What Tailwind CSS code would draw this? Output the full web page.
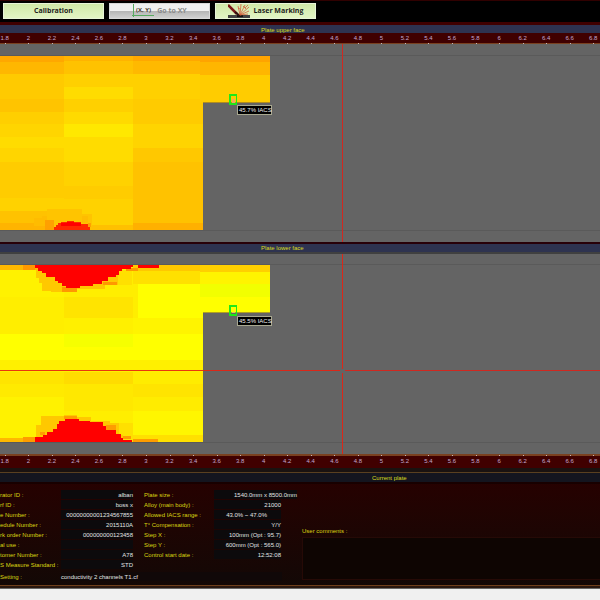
<!DOCTYPE html>
<html lang="en">
<head>
<meta charset="utf-8">
<title>Plate conductivity</title>
<script src="https://cdn.jsdelivr.net/npm/@tailwindcss/browser@4"></script>
</head>
<body class="bg-[#f0f0f0] font-['Liberation_Sans',sans-serif] text-[6px] leading-[10px] overflow-x-hidden">
<div class="flex flex-col min-h-screen">

<nav class="flex gap-[5px] h-[25px] px-[3px] pt-[2px] bg-black border-t border-b-3 border-t-[#300000] border-b-[#400000] font-['Open_Sans',sans-serif] text-[7px] font-bold">
  <button class="w-[101px] h-4 flex items-center justify-center bg-linear-to-b from-[#d0e8a8] to-[#e2f4c4] border border-[#e8f4d8] text-[#1c1c1c]">Calibration</button>
  <button class="w-[101px] h-4 flex items-center justify-center gap-[3px] bg-linear-to-b from-[#f0f0f0] from-50% via-[#b4b4b4] via-50% to-[#d0d0d0] border border-[#d8d8d8] text-[#8c8c8c]">
    <svg class="w-[22px] h-[14px]" viewBox="0 0 22 14" aria-hidden="true"><path d="M1.500 0v13M0 11.500h22" stroke="#58aa60" stroke-width="1" fill="none"/><text x="4" y="8" font-size="6" font-weight="700" fill="#4c4030" font-family="Open Sans">(X, Y)</text></svg>
    Go to XY
  </button>
  <button class="w-[101px] h-4 flex items-center justify-center gap-1 bg-linear-to-b from-[#d0e8a8] to-[#e2f4c4] border border-[#e8f4d8] text-[#1c1c1c]">
    <svg class="w-[22px] h-[14px]" viewBox="0 0 22 14" aria-hidden="true"><path d="M0 11h22v3H0z" fill="#444"/><path d="M9 12h6" stroke="#111" stroke-width="2"/><path d="M0 1L9 10" stroke="#7c1818" stroke-width="2.500"/><path d="M7 8l5 4" stroke="#301010" stroke-width="2"/><path d="M12 11L10 2M12 11L13 0M12 11L17 1M12 11L21 3M12 11L21 7M12 11L20 10M15 2l3 3M10 4l2 1M17 4l3-3" stroke="#d0603c" stroke-width=".8" fill="none"/></svg>
    Laser Marking
  </button>
</nav>

<main>
<section>
  <h2 class="h-2 leading-[10px] pl-[261px] bg-[#2e3350] text-[#dcdc20]">Plate upper face</h2>
  <ol class="ruler grid grid-cols-26 h-[11px] -ml-[7px] -mr-[5px] bg-[#400000] border-b border-[#7a4020] text-center leading-[11px] text-[#c0a8d0]"></ol>
  <svg class="block w-full h-[198px] bg-[#646464]" shape-rendering="crispEdges" role="img" aria-label="Upper face conductivity map">
    <path d="M0 11.500h2000M0 186.500h2000" stroke="#5a5a5a"/>
    <g class="bands" data-x="0" data-w="64" data-bands="12 18 #ffa800,18 30 #ffb700,30 55 #ffca00,55 68 #ffc400,68 80 #ffcf00,80 93 #ffd500,93 104 #ffdc00,104 118 #ffd500,118 154 #ffcc00,154 167 #ffd200,167 179 #ffc200,179 186 #ffb400"></g>
    <g class="bands" data-x="64" data-w="69" data-bands="12 17 #ffb400,17 30 #ffc200,30 43 #ffd000,43 55 #ffdc00,55 68 #ffd000,68 80 #ffda00,80 93 #ffe800,93 118 #ffdc00,118 142 #ffd200,142 155 #ffcc00,155 181 #ffd200,181 186 #ffc000"></g>
    <g class="bands" data-x="133" data-w="70" data-bands="12 17 #ffa800,17 30 #ffb900,30 55 #ffd000,55 80 #ffcb00,80 104 #ffd400,104 118 #ffc800,118 179 #ffc200,179 186 #ffb000"></g>
    <g class="bands" data-x="200" data-w="70" data-bands="12 18 #ffa400,18 31 #ffb600,31 58 #ffcc00"></g>
    <path d="M47 165h35v5h10v12h-5v4H45v-12h2z" fill="#ffc400"/>
    <path d="M34 174h8v-2h5v10H34zM82 172h6v7h-6z" fill="#ffbc00"/>
    <path d="M45 176h9v10h-9zM88 179h3v4h-3z" fill="#ffa000"/>
    <path d="M54 186v-3h2v-2h2v-2h3v-1h6v-1h7v1h7v2h7v3h2v3z" fill="#ff2800"/>
    <path d="M61 179h6v-1h7v1h7v3H61z" fill="#ff0000"/>
    <path d="M203 58.500h67" stroke="#b08c20"/>
    <path d="M342.500 0V198" stroke="#d02820"/>
    <path d="M229 50h8v11h-8zM231 52v7h5v-7z" fill="#20e818" fill-rule="evenodd"/>
    <path d="M232 55h3v4h-3z" fill="#f0a860"/>
    <rect x="237.500" y="61.500" width="34" height="9" fill="#000" stroke="#a8a890"/>
    <text x="239" y="68" fill="#f0f0f0">45.7% IACS</text>
  </svg>
</section>

<section>
  <h2 class="h-3 leading-[9px] pl-[261px] bg-[#2e3350] text-[#dcdc20] border-y-2 border-t-[#280008] border-b-[#404040]">Plate lower face</h2>
  <svg class="block w-full h-[200px] bg-[#646464]" shape-rendering="crispEdges" role="img" aria-label="Lower face conductivity map">
    <path d="M0 10.500h2000M0 188.500h2000" stroke="#5a5a5a"/>
    <g class="bands" data-x="0" data-w="64" data-bands="11 16 #ffb800,16 43 #fff200,43 80 #ffee00,80 106 #ffff00,106 118 #fff000,118 130 #ffe400,130 143 #ffea00,143 184 #fff200,184 188 #ffb800"></g>
    <g class="bands" data-x="64" data-w="69" data-bands="11 43 #ffee00,43 64 #ffe400,64 80 #fff000,80 93 #f6ff00,93 106 #ffff00,106 118 #fff000,118 130 #ffdc00,130 157 #ffe800,157 169 #ffee00,169 188 #ffe000"></g>
    <g class="bands" data-x="133" data-w="70" data-bands="11 17 #ffc800,17 30 #ffe000,30 64 #ffff00,64 80 #fff400,80 106 #ffff00,106 118 #fff000,118 130 #ffec00,130 143 #ffe400,143 157 #ffec00,157 181 #fff600,181 188 #ffe000"></g>
    <g class="bands" data-x="200" data-w="70" data-bands="11 18 #ffd000,18 30 #fff400,30 43 #f2ff00,43 58 #ffff00"></g>
    <path d="M133 30h5v34h-5z" fill="#ffee00"/>
    <path d="M36 16h90v8h-7v7h-14v4H77v3H51v-1H42v-8h-3v-5h-3z" fill="#ffc800"/>
    <path d="M118 16h14v15h-14z" fill="#ffe000"/>
    <path d="M23 11h12v5H23zM62 33h15v5H62zM103 28h14v3h-14zM126 14h12v3h-12z" fill="#ff9800"/>
    <path d="M35 11h98v2h-2v2h-9v2h-3v4h-3v2h-8v4h-6v3h-9v2H80v2H66v-2h-4v-3h-4v-2h-3v-4H46v-4h-4v-2h-4v-3h-3zM138 11h21v3h-21z" fill="#ff0000"/>
    <path d="M36 183v-12h5v-9h23v-1h13v2h14v4h19v2h9v12h4v4H36z" fill="#ffc800"/>
    <path d="M23 183h12v5H23zM64 162h13v3H64zM106 171h10v6h-10zM40 178h5v3h-5zM123 182h8v3h-8zM133 185h25v3h-25z" fill="#ff9c00"/>
    <path d="M35 188v-5h8v-2h4v-3h6v-3h4v-5h2v-3h6v-2h14v2h11v1h13v4h3v4h10v4h5v4h2v2h9v2z" fill="#ff0000"/>
    <path d="M203 58.500h67" stroke="#b0a020"/>
    <path d="M342.500 0V115M342.500 119V200M0 116.500h340" stroke="#e82010" stroke-opacity=".9"/>
    <line x1="345" y1="116.500" x2="100%" y2="116.500" stroke="#d02820"/>
    <path d="M229 51h8v11h-8zM231 53v7h5v-7z" fill="#20e818" fill-rule="evenodd"/>
    <path d="M232 58h3v1h-3z" fill="#d8c860"/>
    <rect x="237.500" y="62.500" width="34" height="9" fill="#000" stroke="#a8a890"/>
    <text x="239" y="69" fill="#f0f0f0">45.5% IACS</text>
  </svg>
  <ol class="ruler grid grid-cols-26 h-[14px] -ml-[7px] -mr-[5px] bg-[#400000] border-t-2 border-[#7a4020] text-center leading-[10px] text-[#c0a8d0]"></ol>
</section>

<section class="bg-linear-to-b from-[#280000] to-[#120806] border-t-4 border-[#1a1210]">
  <h2 class="h-3 leading-[11px] pl-[372px] bg-[#14151f] text-[#dcdc20] border-t border-b-2 border-t-[#5a4020] border-b-[#180000]">Current plate</h2>
  <div class="flex h-[101px] pt-[6px] text-[#dcd410]">
    <div>
      <div class="flex">
        <dl class="w-[133px] grid grid-cols-[61px_72px] auto-rows-[10px] whitespace-nowrap [&_dd]:h-[9px] [&_dd]:bg-[#0c0a0c] [&_dd]:text-right [&_dd]:text-[#e4e4e4]">
          <dt>rator ID :</dt><dd>alban</dd>
          <dt>rf ID :</dt><dd>boss x</dd>
          <dt>e Number :</dt><dd>00000000001234567855</dd>
          <dt>edule Number :</dt><dd>2015110A</dd>
          <dt>rk order Number :</dt><dd>000000000123458</dd>
          <dt>al use :</dt><dd></dd>
          <dt>tomer Number :</dt><dd>A78</dd>
          <dt>S Measure Standard :</dt><dd>STD</dd>
        </dl>
        <dl class="ml-[11px] grid grid-cols-[70px_67px] auto-rows-[10px] whitespace-nowrap [&_dd]:h-[9px] [&_dd]:bg-[#0c0a0c] [&_dd]:text-right [&_dd]:text-[#e4e4e4]">
          <dt>Plate size :</dt><dd class="-mr-4">1540.0mm x 8500.0mm</dd>
          <dt>Alloy (main body) :</dt><dd>21000</dd>
          <dt>Allowed IACS range :</dt><dd class="pr-[14px]">43.0% ~ 47.0%</dd>
          <dt>T° Compensation :</dt><dd>Y/Y</dd>
          <dt>Step X :</dt><dd>100mm (Opt : 95.7)</dd>
          <dt>Step Y :</dt><dd>600mm (Opt : 565.0)</dd>
          <dt>Control start date :</dt><dd>12:52:08</dd>
        </dl>
      </div>
      <dl class="flex mt-[2px]">
        <dt class="w-[61px]">Setting :</dt><dd class="w-[221px] h-[9px] bg-[#100808] text-[#e4e4e4]">conductivity 2 channels T1.cf</dd>
      </dl>
    </div>
    <div class="flex-1 flex flex-col pl-5 pt-9">
      <label for="comments">User comments :</label>
      <textarea id="comments" class="block w-full h-[43px] mt-[1px] resize-none bg-[#0e0502] border border-r-0 border-[#260a06] text-[#e4e4e4]"></textarea>
    </div>
  </div>
  <div class="h-1 bg-[#2a1810] border-t border-b border-t-[#70401c] border-b-[#686868]"></div>
</section>
</main>
<footer class="flex-1 min-h-3 border-b border-[#805058]"></footer>
</div>

<script>
// Scale labels, 1.8 to 6.8 in steps of 0.2; the tick sits on the plate side.
document.querySelectorAll('.ruler').forEach((ruler, index) => {
  const tickPlace = index === 0 ? 'bottom-0' : '-top-px';
  for (let i = 0; i < 26; i++) {
    const li = document.createElement('li');
    li.className = 'relative';
    li.textContent = String((18 + 2 * i) / 10);
    const tick = document.createElement('span');
    tick.className = 'absolute left-1/2 w-px h-px bg-[#c8b8b8] ' + tickPlace;
    li.append(tick);
    ruler.append(li);
  }
});
// Colour bands of each measured column: "top bottom colour".
document.querySelectorAll('.bands').forEach(group => {
  group.dataset.bands.split(',').forEach(band => {
    const [top, bottom, colour] = band.split(' ');
    const rect = document.createElementNS('http://www.w3.org/2000/svg', 'rect');
    rect.setAttribute('x', group.dataset.x);
    rect.setAttribute('width', group.dataset.w);
    rect.setAttribute('y', top);
    rect.setAttribute('height', bottom - top);
    rect.setAttribute('fill', colour);
    group.append(rect);
  });
});
</script>
</body>
</html>
